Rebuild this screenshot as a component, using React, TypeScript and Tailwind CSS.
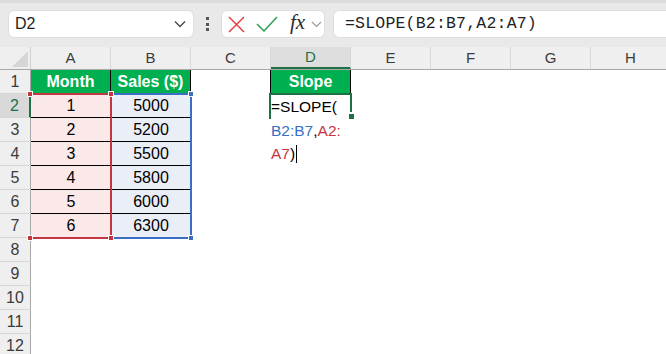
import React from "react";

const cols = ["A", "B", "C", "D", "E", "F", "G", "H"];
const months = ["1", "2", "3", "4", "5", "6"];
const sales = ["5000", "5200", "5500", "5800", "6000", "6300"];

function Corner({ className }: { className: string }) {
  return <div className={`absolute w-[6px] h-[6px] border border-white ${className}`} />;
}

function Toolbar() {
  return (
    <div className="h-[47px] bg-[#e9e9e9] border-t-[3px] border-[#dfdcdf] flex items-start pt-[7px] pl-[8px]">
      {/* name box */}
      <div className="w-[186px] h-[28px] bg-white rounded-[6px] border border-[#dedede] flex items-center justify-between pl-[6px] pr-[7px]">
        <span className="text-[16px] text-[#1f1f1f]">D2</span>
        <svg width="12" height="8" viewBox="0 0 12 8" fill="none" stroke="#444" strokeWidth="1.3">
          <polyline points="1,1.5 6,6.5 11,1.5" />
        </svg>
      </div>
      <div className="w-[27px] h-[28px] flex flex-col items-center justify-center gap-[2.5px]">
        <div className="w-[3px] h-[3px] bg-[#555]" />
        <div className="w-[3px] h-[3px] bg-[#555]" />
        <div className="w-[3px] h-[3px] bg-[#555]" />
      </div>
      {/* cancel / enter / fx */}
      <div className="w-[104px] h-[28px] bg-white rounded-[6px] border border-[#dedede] flex items-center pl-[6px]">
        <svg width="17" height="17" viewBox="0 0 17 17" fill="none" stroke="#e5383f" strokeWidth="1.4">
          <line x1="1" y1="1" x2="16" y2="16" />
          <line x1="16" y1="1" x2="1" y2="16" />
        </svg>
        <svg width="22" height="16" viewBox="0 0 22 16" fill="none" stroke="#2f9e4f" strokeWidth="1.5" className="ml-[11px]">
          <polyline points="1,8 8,15 21,1" />
        </svg>
        <span className="ml-[12px] text-[21px] italic text-[#2b2b2b] leading-none -mt-[3px]" style={{ fontFamily: "'Liberation Serif', serif" }}>
          fx
        </span>
        <svg width="11" height="7" viewBox="0 0 11 7" fill="none" stroke="#9a9a9a" strokeWidth="1.2" className="ml-[6px]">
          <polyline points="1,1 5.5,5.5 10,1" />
        </svg>
      </div>
      {/* formula input */}
      <div className="ml-[8px] flex-1 h-[28px] bg-white rounded-l-[6px] border border-r-0 border-[#dedede] flex items-center pl-[11px]">
        <span className="text-[16.5px] text-[#1f1f1f] tracking-[0.2px]" style={{ fontFamily: "'Liberation Mono', monospace" }}>
          =SLOPE(B2:B7,A2:A7)
        </span>
      </div>
    </div>
  );
}

function HeaderRow() {
  return (
    <div className="flex h-[23px] bg-[#efefef] border-b border-[#a8a8a8]">
      <div className="w-[31px] shrink-0 border-r border-[#cfcfcf] relative overflow-hidden">
        <div className="absolute right-[2px] bottom-[2px] w-0 h-0 border-l-[16px] border-l-transparent border-b-[16px] border-b-[#d6d6d6]" />
      </div>
      {cols.map((c) => (
        <div
          key={c}
          className={`w-[80px] shrink-0 flex items-center justify-center text-[15px] border-r border-[#d8d8d8] ${
            c === "D" ? "bg-[#dedede] text-[#1e7145] border-b-2 border-b-[#1e7145]" : "text-[#3b3b3b]"
          }`}
        >
          {c}
        </div>
      ))}
    </div>
  );
}

function Cell({ className = "", children }: { className?: string; children?: React.ReactNode }) {
  return (
    <div className={`w-[80px] h-full shrink-0 flex items-center justify-center text-[16px] text-black ${className}`}>
      {children}
    </div>
  );
}

function Row({ n }: { n: number }) {
  const active = n === 2;
  let cells: React.ReactNode;
  if (n === 1) {
    cells = (
      <>
        <Cell className="bg-[#00b050] text-white font-bold text-[15.5px] border-r border-black">Month</Cell>
        <Cell className="bg-[#00b050] text-white font-bold text-[15.5px] border-r border-black">Sales ($)</Cell>
        <Cell className="border-r border-black" />
        <Cell className="bg-[#00b050] text-white font-bold text-[15.5px] border-r border-black">Slope</Cell>
      </>
    );
  } else if (n <= 7) {
    const line = n < 7 ? "border-b border-black" : "";
    cells = (
      <>
        <Cell className={`bg-[#fbe9ea] ${line}`}>{months[n - 2]}</Cell>
        <Cell className={`bg-[#e9eef7] ${line}`}>{sales[n - 2]}</Cell>
      </>
    );
  }
  return (
    <div className="flex h-[24px]">
      <div
        className={`w-[31px] shrink-0 flex items-center justify-center text-[16px] border-b border-[#d6d6d6] ${
          active ? "bg-[#d9d9d9] text-[#1e7145] border-r-2 border-r-[#1e7145]" : "bg-[#efefef] text-[#3b3b3b] border-r border-r-[#a8a8a8]"
        }`}
      >
        {n}
      </div>
      {cells}
    </div>
  );
}

export default function App() {
  return (
    <div className="w-[666px] h-[354px] overflow-hidden bg-white relative" style={{ fontFamily: "'Liberation Sans', Arial, sans-serif" }}>
      <Toolbar />
      <HeaderRow />
      <div className="relative">
        {Array.from({ length: 12 }, (_, i) => (
          <Row key={i} n={i + 1} />
        ))}

        {/* B2:B7 range */}
        <div className="absolute left-[110px] top-[23px] w-[82px] h-[146px] border-2 border-l-0 border-[#3a6fc4]">
          <Corner className="-right-[4px] -top-[4px] bg-[#3a6fc4]" />
          <Corner className="-right-[4px] -bottom-[4px] bg-[#3a6fc4]" />
        </div>
        {/* A2:A7 range */}
        <div className="absolute left-[31px] top-[23px] w-[81px] h-[146px] border-2 border-l-0 border-[#c4363f]">
          <Corner className="-right-[4px] -top-[4px] bg-[#c4363f]" />
          <Corner className="-right-[4px] -bottom-[4px] bg-[#c4363f]" />
          <Corner className="-left-[4px] -top-[4px] bg-[#c4363f]" />
          <Corner className="-left-[4px] -bottom-[4px] bg-[#c4363f]" />
        </div>

        {/* D2 in edit mode */}
        <div className="absolute left-[269px] top-[23px] w-[83px] h-[26px] border-t-2 border-l-2 border-[#1e7145]" />
        <div className="absolute left-[350px] top-[23px] w-[2px] h-[19px] bg-[#1e7145]" />
        <div className="absolute left-[349px] top-[44px] w-[5px] h-[5px] bg-[#1e7145]" />
        <div className="absolute left-[271px] top-[25px] text-[15.5px] leading-[23.5px] text-black">
          <div>=SLOPE(</div>
          <div>
            <span className="text-[#3a6fc4]">B2:B7</span>,<span className="text-[#c4363f]">A2:</span>
          </div>
          <div className="flex items-center">
            <span className="text-[#c4363f]">A7</span>)
            <span className="inline-block w-px h-[18px] bg-black ml-px" />
          </div>
        </div>
      </div>
    </div>
  );
}
